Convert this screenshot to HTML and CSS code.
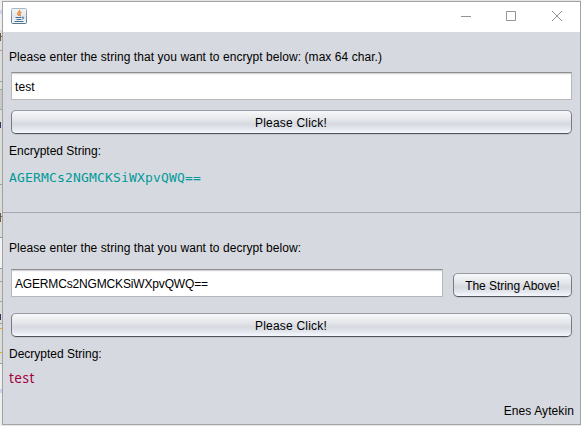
FILE: index.html
```
<!DOCTYPE html>
<html lang="en">
<head>
<meta charset="utf-8">
<title>String encryption</title>
<link rel="stylesheet" href="styles.css">
</head>
<body>
<div class="desktop">
  <div class="behind">
    <svg width="3" height="426" shape-rendering="crispEdges">
      <rect width="3" height="426" fill="#dcdcd8"/>
      <rect width="3" height="30" fill="#eeeeee"/>
      <rect y="10" width="3" height="4" fill="#d2d0f0"/>
      <rect y="90" width="3" height="20" fill="#c8c8c6"/>
      <path d="M0 50.500h3M0 81.500h3M0 89.500h3M0 109.500h3M0 184.500h3M0 281.500h3M0 301.500h3M0 323.500h3M0 363.500h3" stroke="#a3a3a3"/>
      <path d="M0 237.500h3M0 268.500h3" stroke="#8299b2"/>
      <rect y="238" width="3" height="30" fill="#f2f2f2"/>
      <path d="M0 328.500h3M0 352.500h3" stroke="#e6a62c"/>
      <rect y="364" width="3" height="62" fill="#eeeeee"/>
      <rect y="389" width="3" height="4" fill="#d2d0f0"/>
      <path d="M0 36.500h2M.5 33v8M0 216.500h2M.5 213v9" stroke="#6a6046"/>
      <path d="M.5 122v6M.5 314v6" stroke="#3a2f70"/>
    </svg>
  </div>
  <main class="window">
    <header class="titlebar">
      <svg class="logo" width="16" height="16" viewBox="0 0 16 16" fill="none">
        <defs><linearGradient id="tile" x1="0" y1="0" x2="0" y2="1"><stop stop-color="#f3f5f7"/><stop offset=".5" stop-color="#e2e8ed"/><stop offset="1" stop-color="#f8f9fa"/></linearGradient><linearGradient id="edge" x1="0" y1="0" x2="0" y2="1"><stop stop-color="#a6b7c3"/><stop offset="1" stop-color="#54768f"/></linearGradient></defs>
        <rect x=".5" y=".5" width="15" height="15" rx="1" fill="url(#tile)" stroke="url(#edge)"/>
        <path d="M8.700 2c.8 1.700-2.700 2.400-1.900 4 .3.700 1 .9 1 1.900M10.500 4.200c-2 .8-2.300 1.500-1.500 2.300.5.500.3 1-.2 1.500" stroke="#e88732" stroke-width="1.400"/>
        <path d="M4.500 9.500h6M5.500 11.500h4.800M11 9.200c2.500-.7 2.300 1.500.1 2M3.500 13.500h9" stroke="#456f91"/>
      </svg>
      <svg class="controls" width="103" height="12" fill="none" stroke="#949494">
        <path d="M0 5.500h10"/><path d="M45.500.500h9v9h-9z"/><path d="M91 0l10 10M101 0l-10 10"/>
      </svg>
    </header>
    <section class="encrypt">
      <p class="label prompt">Please enter the string that you want to encrypt below: (max 64 char.)</p>
      <div class="field">test</div>
      <button class="btn wide">Please Click!</button>
      <p class="label caption">Encrypted String:</p>
      <p class="result teal">AGERMCs2NGMCKSiWXpvQWQ==</p>
    </section>
    <section class="decrypt">
      <p class="label prompt">Please enter the string that you want to decrypt below:</p>
      <div class="row">
        <div class="field code">AGERMCs2NGMCKSiWXpvQWQ==</div>
        <button class="btn small">The String Above!</button>
      </div>
      <button class="btn wide second">Please Click!</button>
      <p class="label caption">Decrypted String:</p>
      <p class="result red">test</p>
      <p class="label author">Enes Aytekin</p>
    </section>
  </main>
</div>
</body>
</html>
```
FILE: styles.css
```
* { box-sizing: border-box; }
body { margin: 0; overflow: hidden; background: #e6e6e6; color: #000; font: 12px/16px "Liberation Sans", Arial, sans-serif; }
p { margin: 0; white-space: nowrap; }
.desktop { display: flex; width: 581px; height: 426px; }
.behind { width: 2px; overflow: hidden; }
.behind svg { display: block; }
.window { width: 579px; height: 424px; margin-top: 1px; border: 1px solid #a3a3a3; background: #d6d9df; }
.titlebar { display: flex; justify-content: space-between; height: 30px; padding: 6px 16px 0 8px; background: #fff; }
.controls { margin-top: 3px; }
.encrypt { height: 181px; padding: 17px 8px 0 6px; border-bottom: 1px solid #a5a8b0; }
.decrypt { padding: 27px 8px 0 6px; }
.label { height: 16px; }
.prompt { letter-spacing: .06px; }
.field { height: 28px; margin: 7px 0 0 2px; padding: 6px 3px 0; border: 1px solid #b7b8ba; border-top-color: #8d8e8f; background: #fff; box-shadow: inset 0 1px #d5d5d5, inset 0 2px #f5f5f5; letter-spacing: .1px; }
.code { letter-spacing: -.16px; }
.btn { display: block; height: 24px; margin: 0; padding: 1px 0 0; border: 1px solid #777b84; border-top-color: #989ba2; border-bottom-color: #4f545e; border-radius: 5px; background: linear-gradient(#f7f8fa, #e6e8ec 35%, #d6d9df 60%, #e3e6ed 80%, #f5f8ff); box-shadow: 0 1px #c3c6cd; color: inherit; font: inherit; letter-spacing: .2px; }
.wide { width: 561px; margin: 10px 0 0 2px; padding-right: 1px; }
.caption { margin-top: 9px; }
.result { height: 18px; font: 13px/18px "DejaVu Sans Mono", monospace; }
.teal { margin-top: 10px; color: #009a9a; letter-spacing: .17px; }
.row { display: flex; align-items: flex-start; margin-top: 13px; }
.row .field { width: 432px; margin-top: 0; }
.small { width: 119px; margin: 4px 0 0 10px; letter-spacing: -.05px; }
.second { margin-top: 16px; }
.red { margin-top: 7px; color: #a3003d; font-family: "Noto Sans", sans-serif; font-size: 13.5px; letter-spacing: .5px; }
.author { margin: 16px -2px 0 0; text-align: right; letter-spacing: .1px; }
```
